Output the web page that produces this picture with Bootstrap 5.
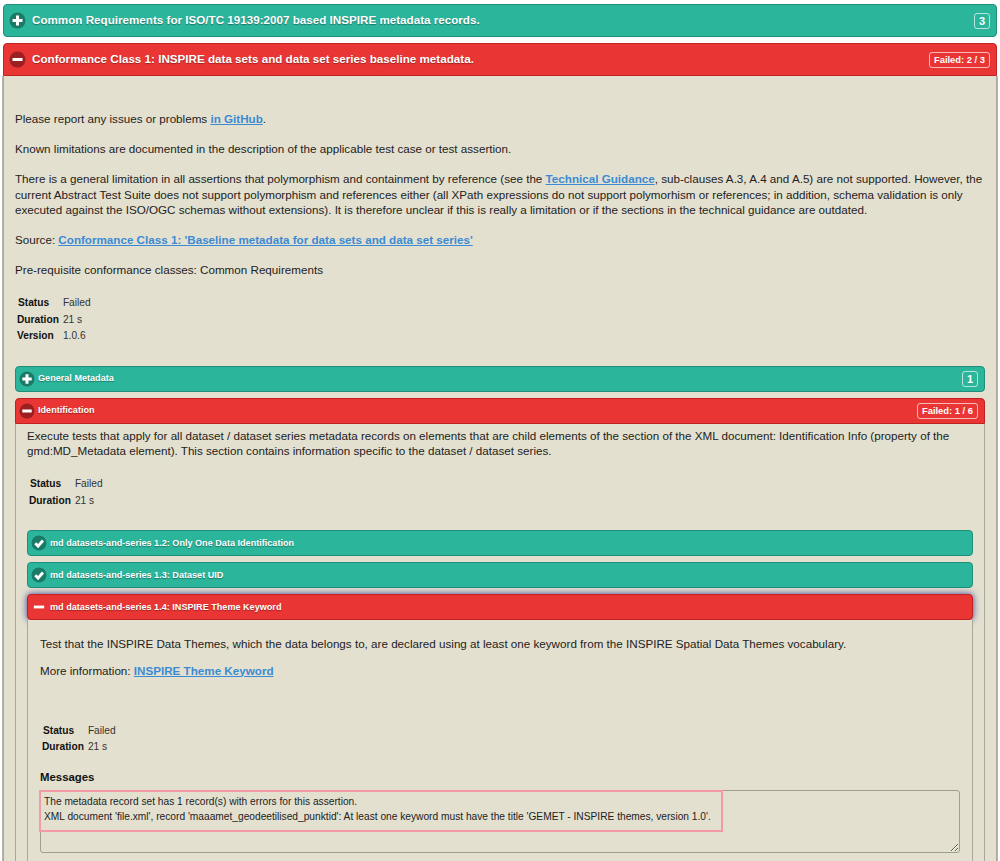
<!DOCTYPE html>
<html lang="en">
<head>
<meta charset="utf-8">
<title>Test report</title>
<link href="https://cdn.jsdelivr.net/npm/bootstrap@5.3.0/dist/css/bootstrap.min.css" rel="stylesheet">
<style>
html,body{height:861px;overflow:hidden}
body{background:#fff;font-family:"Liberation Sans",Arial,sans-serif;font-size:11.65px;line-height:15.2px;color:#222;padding:4px 3px 0}
.acc-bar{display:flex;align-items:center;color:#fff;font-weight:700;border:1px solid;border-radius:4px;text-shadow:0 1px 1px rgba(0,0,0,.35)}
.bar-lg{height:33px;padding:0 6px 0 5px;font-size:11.65px;gap:6px}
.bar-lg .head-text{margin-bottom:2px}
.bar-sm{height:26px;padding:0 6px 0 3px;font-size:9.1px;gap:3px}
.bar-ok{background:#2bb59b;border-color:#1f8f7b}
.bar-fail{background:#e93533;border-color:#c02222}
.is-open{border-radius:4px 4px 0 0}
.bar-focus{box-shadow:0 0 7px #3c3f9a;border-radius:4px}
.glyph{flex:none;display:block}
.count-pill{margin-left:auto;min-width:16px;text-align:center;border:1px solid rgba(255,255,255,.65);border-radius:3px;font-size:9.4px;line-height:14px;padding:0 4px;text-shadow:none;font-weight:700}
.pill-digit{font-size:11px;padding:0}
.panel-body{background:#e4e0cf;border:solid #a9a79b;border-width:0 1px 1px 1px}
.panel-top{padding:35px 11px 0 11px;box-shadow:-1px 0 0 #b9b7ab,1px 0 0 #b9b7ab}
.panel-mid{padding:4px 11px 0 11px}
.panel-deep{padding:16px 12px 30px}
.gap-para{margin:0 0 15px}
.para-tight{margin-bottom:11px}
.copy-link{color:#3b8bd4;font-weight:700;text-decoration:underline}
.info-table{font-size:10.2px;line-height:16.5px;margin:18px 0 0 2px;color:#333}
.info-table th{font-weight:700;color:#111;padding:0 4px 0 0}
.info-table td{padding:0}
.first-cell{padding-left:1px!important}
.stack{display:flex;flex-direction:column;gap:6px}
.stack-offset{margin-top:21px}
.table-offset{margin-top:45px}
.msg-head{font-size:11.4px;font-weight:700;color:#111;margin:14px 0 5px}
.msg-wrap{position:relative}
.msg-box{height:63px;border:1px solid #a09e8e;border-radius:3px;resize:vertical;overflow:hidden;background:#e4e0cf}
.msg-mark{position:absolute;top:0;left:-1px;width:684px;height:42px;border:2px solid #f49aa4;padding:2px 3px 0;font-size:10.2px;line-height:15.2px}
</style>
</head>
<body>
<div class="stack">
  <div class="acc-bar bar-lg bar-ok">
    <svg class="glyph" width="17" height="17" viewBox="0 0 17 17"><circle cx="8.5" cy="8.5" r="8" fill="#1a7a68"/><path d="M8.5 3.5v10M3.5 8.5h10" stroke="#fff" stroke-width="3"/></svg>
    <span class="head-text">Common Requirements for ISO/TC 19139:2007 based INSPIRE metadata records.</span>
    <span class="count-pill pill-digit">3</span>
  </div>
  <div>
    <div class="acc-bar bar-lg bar-fail is-open">
      <svg class="glyph" width="17" height="17" viewBox="0 0 17 17"><circle cx="8.5" cy="8.5" r="8" fill="#9c1f22"/><path d="M3.5 8.5h10" stroke="#fff" stroke-width="3"/></svg>
      <span class="head-text">Conformance Class 1: INSPIRE data sets and data set series baseline metadata.</span>
      <span class="count-pill">Failed: 2 / 3</span>
    </div>
    <div class="panel-body panel-top">
      <p class="gap-para">Please report any issues or problems <a class="copy-link" href="#">in GitHub</a>.</p>
      <p class="gap-para">Known limitations are documented in the description of the applicable test case or test assertion.</p>
      <p class="gap-para">There is a general limitation in all assertions that polymorphism and containment by reference (see the <a class="copy-link" href="#">Technical Guidance</a>, sub-clauses A.3, A.4 and A.5) are not supported. However, the current Abstract Test Suite does not support polymorphism and references either (all XPath expressions do not support polymorhism or references; in addition, schema validation is only executed against the ISO/OGC schemas without extensions). It is therefore unclear if this is really a limitation or if the sections in the technical guidance are outdated.</p>
      <p class="gap-para">Source: <a class="copy-link" href="#">Conformance Class 1: 'Baseline metadata for data sets and data set series'</a></p>
      <p class="gap-para">Pre-requisite conformance classes: Common Requirements</p>
      <table class="info-table">
        <tr><th class="first-cell">Status</th><td>Failed</td></tr>
        <tr><th>Duration</th><td>21 s</td></tr>
        <tr><th>Version</th><td>1.0.6</td></tr>
      </table>
      <div class="stack stack-offset">
        <div class="acc-bar bar-sm bar-ok">
          <svg class="glyph" width="16" height="16" viewBox="0 0 17 17"><circle cx="8.5" cy="8.5" r="8" fill="#1a7a68"/><path d="M8.5 3.5v10M3.5 8.5h10" stroke="#fff" stroke-width="3.2"/></svg>
          <span>General Metadata</span>
          <span class="count-pill pill-digit">1</span>
        </div>
        <div>
          <div class="acc-bar bar-sm bar-fail is-open">
            <svg class="glyph" width="16" height="16" viewBox="0 0 17 17"><circle cx="8.5" cy="8.5" r="8" fill="#9c1f22"/><path d="M3.5 8.5h10" stroke="#fff" stroke-width="3.2"/></svg>
            <span>Identification</span>
            <span class="count-pill">Failed: 1 / 6</span>
          </div>
          <div class="panel-body panel-mid">
            <p class="gap-para">Execute tests that apply for all dataset / dataset series metadata records on elements that are child elements of the section of the XML document: Identification Info (property of the gmd:MD_Metadata element). This section contains information specific to the dataset / dataset series.</p>
            <table class="info-table">
              <tr><th class="first-cell">Status</th><td>Failed</td></tr>
              <tr><th>Duration</th><td>21 s</td></tr>
            </table>
            <div class="stack stack-offset">
              <div class="acc-bar bar-sm bar-ok">
                <svg class="glyph" width="16" height="16" viewBox="0 0 17 17"><circle cx="8.5" cy="8.5" r="8" fill="#1a7a68"/><path d="M4.5 8.8l3 3 5.2-6" fill="none" stroke="#fff" stroke-width="3"/></svg>
                <span>md datasets-and-series 1.2: Only One Data Identification</span>
              </div>
              <div class="acc-bar bar-sm bar-ok">
                <svg class="glyph" width="16" height="16" viewBox="0 0 17 17"><circle cx="8.5" cy="8.5" r="8" fill="#1a7a68"/><path d="M4.5 8.8l3 3 5.2-6" fill="none" stroke="#fff" stroke-width="3"/></svg>
                <span>md datasets-and-series 1.3: Dataset UID</span>
              </div>
              <div>
                <div class="acc-bar bar-sm bar-fail bar-focus">
                  <svg class="glyph" width="16" height="16" viewBox="0 0 17 17"><path d="M3 8.5h11" stroke="#fff" stroke-width="3"/></svg>
                  <span>md datasets-and-series 1.4: INSPIRE Theme Keyword</span>
                </div>
                <div class="panel-body panel-deep">
                  <p class="gap-para para-tight">Test that the INSPIRE Data Themes, which the data belongs to, are declared using at least one keyword from the INSPIRE Spatial Data Themes vocabulary.</p>
                  <p class="gap-para">More information: <a class="copy-link" href="#">INSPIRE Theme Keyword</a></p>
                  <table class="info-table table-offset">
                    <tr><th class="first-cell">Status</th><td>Failed</td></tr>
                    <tr><th>Duration</th><td>21 s</td></tr>
                  </table>
                  <div class="msg-head">Messages</div>
                  <div class="msg-wrap">
                    <div class="msg-box"></div>
                    <div class="msg-mark">The metadata record set has 1 record(s) with errors for this assertion.<br>XML document 'file.xml', record 'maaamet_geodeetilised_punktid': At least one keyword must have the title 'GEMET - INSPIRE themes, version 1.0'.</div>
                  </div>
                </div>
              </div>
            </div>
          </div>
        </div>
      </div>
    </div>
  </div>
</div>
<script src="https://cdn.jsdelivr.net/npm/bootstrap@5.3.0/dist/js/bootstrap.bundle.min.js"></script>
</body>
</html>
